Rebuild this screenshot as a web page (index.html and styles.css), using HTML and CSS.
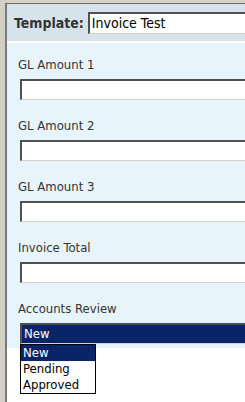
FILE: index.html
```html
<!DOCTYPE html>
<html lang="en">
<head>
  <meta charset="UTF-8" />
  <meta name="viewport" content="width=device-width, initial-scale=1" />
  <title>Invoice Form</title>
  <link rel="stylesheet" href="styles.css">
</head>
<body>
  <div class="frame">
    <div class="header">
      <span class="template-label">Template:</span>
      <div class="box template-box">Invoice Test</div>
    </div>
    <div class="form">
      <div class="field">
        <div class="label">GL Amount 1</div>
        <div class="box"></div>
      </div>
      <div class="field">
        <div class="label">GL Amount 2</div>
        <div class="box"></div>
      </div>
      <div class="field">
        <div class="label">GL Amount 3</div>
        <div class="box"></div>
      </div>
      <div class="field">
        <div class="label">Invoice Total</div>
        <div class="box"></div>
      </div>
      <div class="field last">
        <div class="label">Accounts Review</div>
        <div class="box select">New</div>
        <ul class="options">
          <li class="selected">New</li>
          <li>Pending</li>
          <li>Approved</li>
        </ul>
      </div>
    </div>
  </div>
</body>
</html>
```

FILE: styles.css
```css
body {
  margin: 0;
  background: #d4d0c8;
  font-family: 'DejaVu Sans Condensed', 'DejaVu Sans', sans-serif;
  font-size: 13px;
  color: #333;
  height: 402px;
  overflow: hidden;
}

.frame {
  margin: 3px 0 0 5px;
  height: 399px;
  overflow: hidden;
  background: #fff;
  border-top: 1px solid #6e6e6e;
  border-left: 2px solid #7a7a7a;
}

.header {
  display: flex;
  align-items: center;
  gap: 4px;
  height: 37px;
  padding-left: 7px;
  background: #d6e3eb;
  border-bottom: 2px solid #fff;
}

.template-label {
  font-weight: bold;
  font-size: 14px;
  color: #333;
}

.box {
  height: 18px;
  border-top: 2px solid #505050;
  border-left: 2px solid #505050;
  border-bottom: 1px solid #d4d0c8;
  border-right: 1px solid #d4d0c8;
  background: #fff;
  color: #000;
  line-height: 18px;
  padding-left: 2px;
  margin-right: -20px;
}

.template-box {
  flex: 1;
  height: 19px;
  font-size: 14px;
  line-height: 19px;
}

.form {
  background: #e8f4fc;
  padding: 14px 0 4px 11px;
}

.field {
  margin-bottom: 18px;
  position: relative;
}

.field.last {
  margin-bottom: 0;
}

.label {
  height: 16px;
  line-height: 16px;
  margin-bottom: 6px;
}

.form .box {
  margin-left: 2px;
}

.select {
  background: #0a246a;
  color: #fff;
  line-height: 17px;
}

.options {
  position: absolute;
  left: 2px;
  top: 43px;
  width: 74px;
  margin: 0;
  padding: 0;
  list-style: none;
  background: #fff;
  border: 1px solid #000;
  color: #000;
  z-index: 1;
}

.options li {
  height: 16px;
  line-height: 16px;
  padding-left: 2px;
}

.options li.selected {
  background: #0a246a;
  color: #fff;
}
```
